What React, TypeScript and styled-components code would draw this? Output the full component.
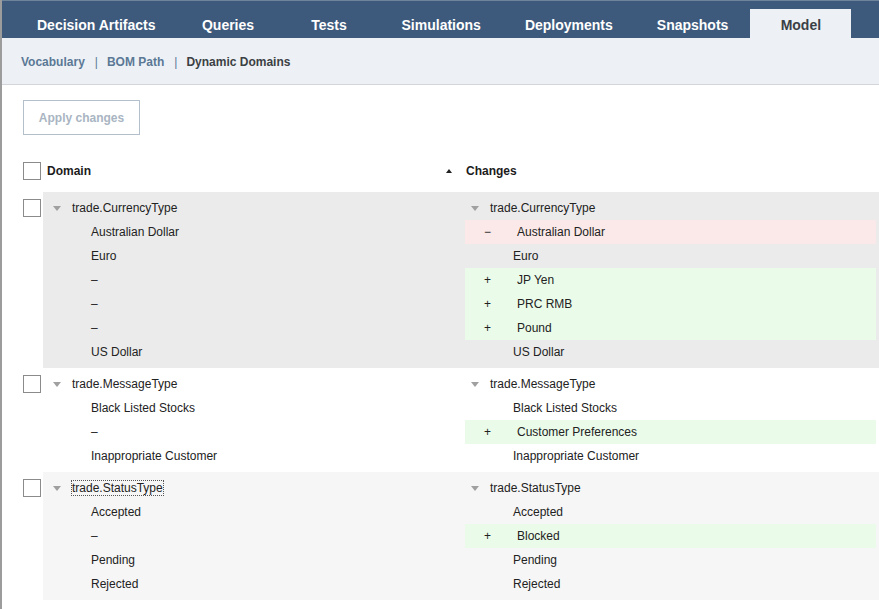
import React from 'react';
import styled, { createGlobalStyle } from 'styled-components';

type Kind = 'same' | 'added' | 'removed';

interface Item {
    left: string;
    right: string;
    kind?: Kind;
}

interface Group {
    name: string;
    tone: 'active' | 'plain' | 'stripe';
    focused?: boolean;
    items: Item[];
}

const tabs = ['Decision Artifacts', 'Queries', 'Tests', 'Simulations', 'Deployments', 'Snapshots', 'Model'];

const groups: Group[] = [
    {
        name: 'trade.CurrencyType',
        tone: 'active',
        items: [
            { left: 'Australian Dollar', right: 'Australian Dollar', kind: 'removed' },
            { left: 'Euro', right: 'Euro' },
            { left: '–', right: 'JP Yen', kind: 'added' },
            { left: '–', right: 'PRC RMB', kind: 'added' },
            { left: '–', right: 'Pound', kind: 'added' },
            { left: 'US Dollar', right: 'US Dollar' },
        ],
    },
    {
        name: 'trade.MessageType',
        tone: 'plain',
        items: [
            { left: 'Black Listed Stocks', right: 'Black Listed Stocks' },
            { left: '–', right: 'Customer Preferences', kind: 'added' },
            { left: 'Inappropriate Customer', right: 'Inappropriate Customer' },
        ],
    },
    {
        name: 'trade.StatusType',
        tone: 'stripe',
        focused: true,
        items: [
            { left: 'Accepted', right: 'Accepted' },
            { left: '–', right: 'Blocked', kind: 'added' },
            { left: 'Pending', right: 'Pending' },
            { left: 'Rejected', right: 'Rejected' },
        ],
    },
];

const toneColors = { active: '#ebebeb', plain: '#ffffff', stripe: '#f6f6f6' };
const kindColors = { same: 'transparent', added: '#ebfbea', removed: '#fae9e8' };

const App = () => {
    return (
        <Page>
            <GlobalStyle />
            <NavBar>
                {tabs.map((tab) => (
                    <Tab key={tab} active={tab === 'Model'}>{tab}</Tab>
                ))}
            </NavBar>
            <SubBar>
                <Crumb>Vocabulary</Crumb>
                <Separator>|</Separator>
                <Crumb>BOM Path</Crumb>
                <Separator>|</Separator>
                <Crumb current>Dynamic Domains</Crumb>
            </SubBar>
            <Content>
                <ApplyButton disabled>Apply changes</ApplyButton>
                <Table>
                    <HeaderRow>
                        <CheckCell><Checkbox /></CheckCell>
                        <HeaderCell>
                            Domain
                            <SortArrow />
                        </HeaderCell>
                        <HeaderCell>Changes</HeaderCell>
                    </HeaderRow>
                    {groups.map((group) => (
                        <GroupRow key={group.name}>
                            <CheckCell inset><Checkbox /></CheckCell>
                            <GroupBody tone={group.tone}>
                                <TitleCell>
                                    <Caret />
                                    <TitleText focused={group.focused}>{group.name}</TitleText>
                                </TitleCell>
                                <TitleCell>
                                    <Caret />
                                    <TitleText>{group.name}</TitleText>
                                </TitleCell>
                                {group.items.map((item, index) => (
                                    <React.Fragment key={index}>
                                        <ValueCell>{item.left}</ValueCell>
                                        {item.kind && item.kind !== 'same' ? (
                                            <ChangeCell kind={item.kind}>
                                                <Sign>{item.kind === 'added' ? '+' : '−'}</Sign>
                                                {item.right}
                                            </ChangeCell>
                                        ) : (
                                            <ValueCell>{item.right}</ValueCell>
                                        )}
                                    </React.Fragment>
                                ))}
                            </GroupBody>
                        </GroupRow>
                    ))}
                </Table>
            </Content>
        </Page>
    );
};

const GlobalStyle = createGlobalStyle`
    body {
        margin: 0;
        font-family: "Liberation Sans", Arial, sans-serif;
        background: #ffffff;
        color: #222222;
    }
`;

const Page = styled.div`
    min-height: 609px;
    border-left: 2px solid #9c9c9c;
    box-sizing: border-box;
    overflow: hidden;
`;

const NavBar = styled.div`
    display: flex;
    align-items: flex-end;
    height: 38px;
    padding-left: 13px;
    background-color: #3d5a7c;
    border-top: 1px solid #6f839a;
    box-sizing: border-box;
`;

const Tab = styled.div<{ active?: boolean }>`
    min-width: 101px;
    height: 29px;
    padding: 2px 22px 0;
    box-sizing: border-box;
    display: flex;
    align-items: center;
    justify-content: center;
    font-size: 14px;
    font-weight: bold;
    white-space: nowrap;
    color: ${(props) => props.active ? '#3b3f46' : '#ffffff'};
    background-color: ${(props) => props.active ? '#edf1f5' : 'transparent'};
`;

const SubBar = styled.div`
    height: 47px;
    display: flex;
    align-items: center;
    padding-left: 19px;
    padding-top: 1px;
    background-color: #edf1f5;
    border-bottom: 1px solid #d2d6da;
    box-sizing: border-box;
`;

const Crumb = styled.span<{ current?: boolean }>`
    font-size: 12px;
    font-weight: bold;
    color: ${(props) => props.current ? '#3c3f44' : '#5b7895'};
`;

const Separator = styled.span`
    font-size: 12px;
    color: #5b7895;
    margin: 0 9px 0 10px;
`;

const Content = styled.div`
    padding: 15px 0 0 21px;
`;

const ApplyButton = styled.button`
    display: block;
    width: 117px;
    height: 35px;
    background: #ffffff;
    border: 1px solid #b3bfcb;
    font-family: inherit;
    font-size: 12px;
    font-weight: bold;
    color: #a9b5c2;
    padding: 0;
`;

const Table = styled.div`
    margin-top: 24px;
    display: flex;
    flex-direction: column;
`;

const HeaderRow = styled.div`
    display: grid;
    grid-template-columns: 20px 422px 1fr;
    height: 24px;
    margin-bottom: 9px;
`;

const HeaderCell = styled.div`
    display: flex;
    align-items: center;
    justify-content: space-between;
    padding: 0 13px 0 4px;
    font-size: 12px;
    font-weight: bold;
    color: #1c1c1c;
    &:last-child {
        padding-left: 1px;
    }
`;

const SortArrow = styled.span`
    width: 0;
    height: 0;
    border-left: 3.5px solid transparent;
    border-right: 3.5px solid transparent;
    border-bottom: 4px solid #222222;
`;

const GroupRow = styled.div`
    display: grid;
    grid-template-columns: 20px 1fr;
    align-items: start;
`;

const CheckCell = styled.div<{ inset?: boolean }>`
    margin-top: ${(props) => props.inset ? '4px' : '0'};
    height: 24px;
    display: flex;
    align-items: center;
`;

const Checkbox = styled.span`
    width: 18px;
    height: 18px;
    box-sizing: border-box;
    border: 1px solid #8b8b8b;
    background: #ffffff;
`;

const GroupBody = styled.div<{ tone: 'active' | 'plain' | 'stripe' }>`
    display: grid;
    grid-template-columns: 422px 1fr;
    grid-auto-rows: 24px;
    padding: 4px 0;
    background-color: ${(props) => toneColors[props.tone]};
`;

const TitleCell = styled.div`
    display: flex;
    align-items: center;
    padding-left: 10px;
    font-size: 12px;
    color: #222222;
    &:nth-child(2) {
        padding-left: 6px;
    }
`;

const Caret = styled.span`
    width: 0;
    height: 0;
    margin-right: 11px;
    border-left: 4.5px solid transparent;
    border-right: 4.5px solid transparent;
    border-top: 5px solid #a0a0a0;
`;

const TitleText = styled.span<{ focused?: boolean }>`
    outline: ${(props) => props.focused ? '1px dotted #555555' : 'none'};
    outline-offset: 0;
`;

const ValueCell = styled.div`
    display: flex;
    align-items: center;
    padding-left: 48px;
    font-size: 12px;
    color: #222222;
`;

const ChangeCell = styled.div<{ kind: Kind }>`
    display: flex;
    align-items: center;
    margin-right: 3px;
    font-size: 12px;
    color: #222222;
    background-color: ${(props) => kindColors[props.kind]};
`;

const Sign = styled.span`
    width: 52px;
    padding-left: 19px;
    box-sizing: border-box;
`;

export default App;
